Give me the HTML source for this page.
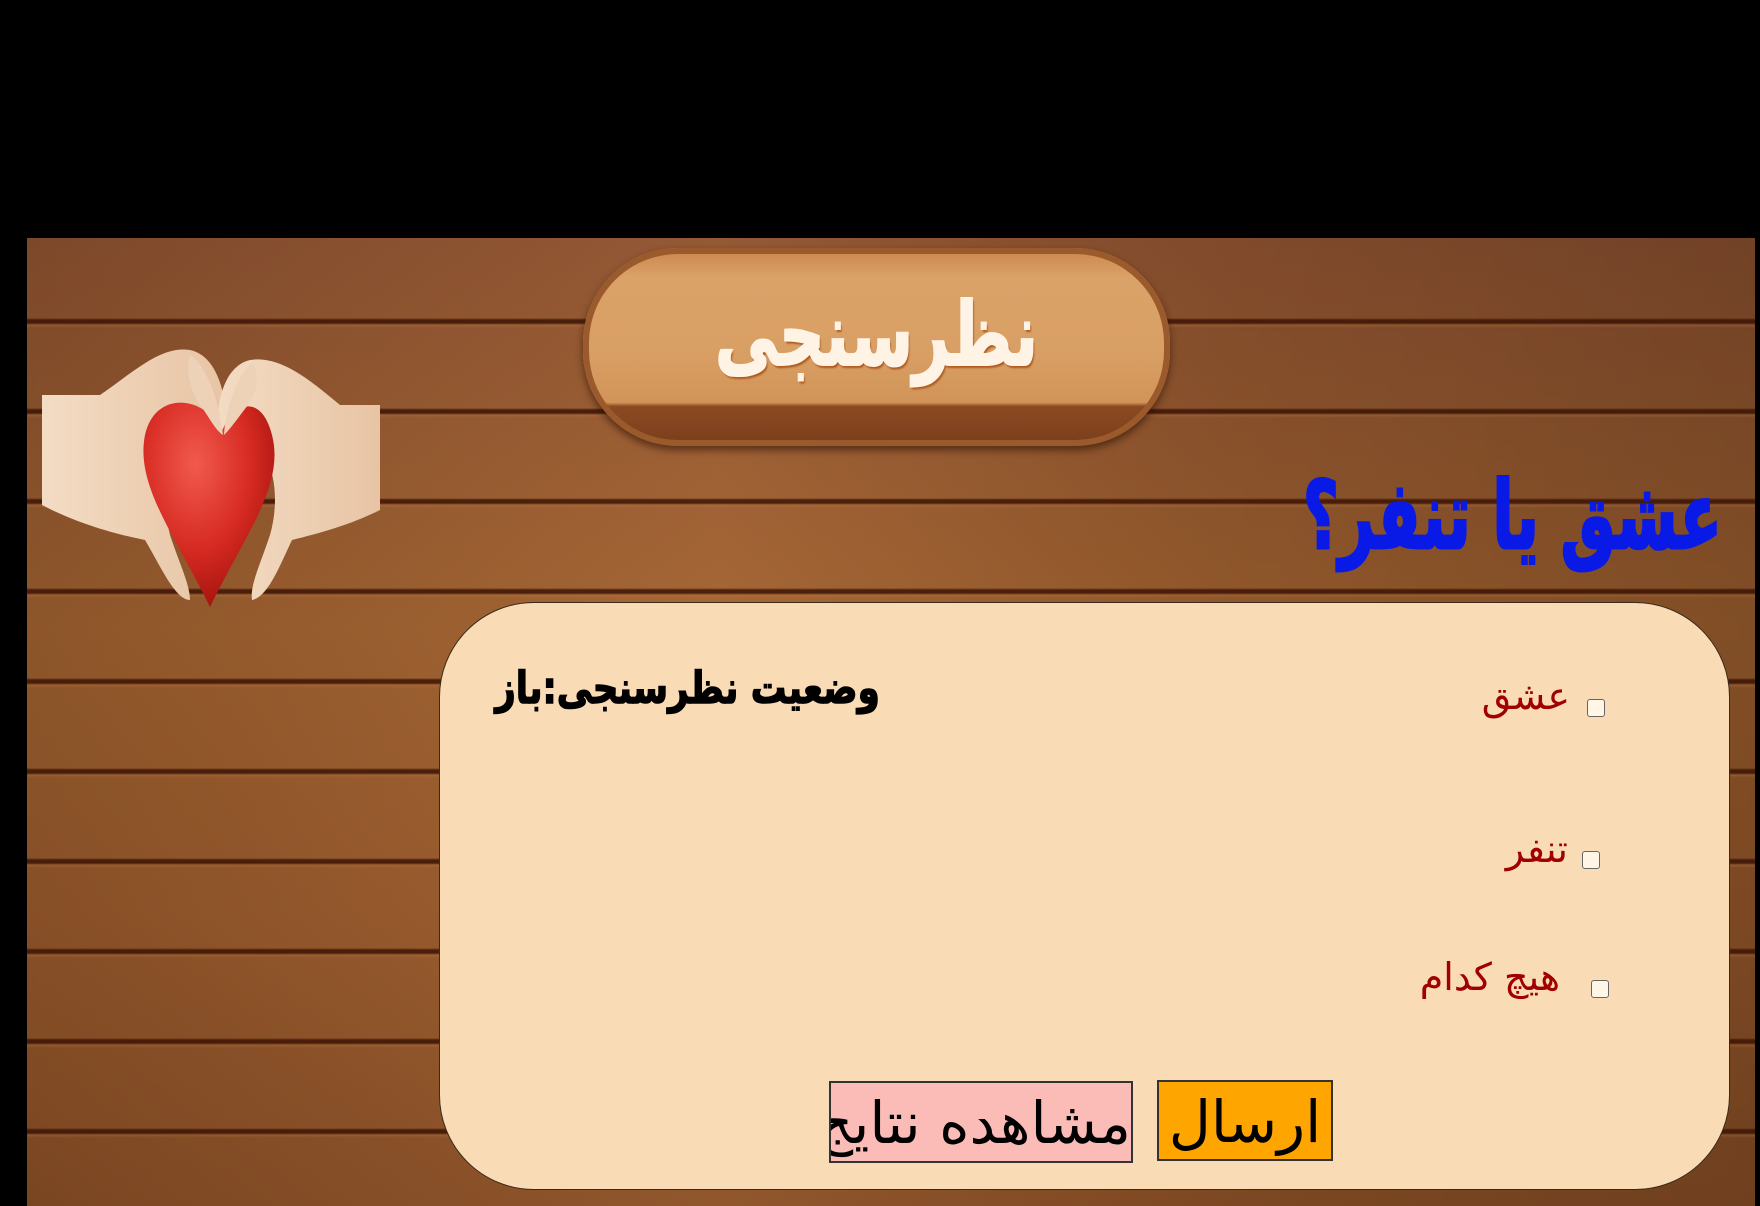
<!DOCTYPE html>
<html><head><meta charset="utf-8">
<style>
html,body{margin:0;padding:0;background:#000;}
body{width:1760px;height:1206px;position:relative;overflow:hidden;font-family:"DejaVu Sans","Liberation Sans","Noto Sans CJK SC",sans-serif;}
.wood{position:absolute;left:27px;top:238px;width:1728px;height:968px;
background:
repeating-linear-gradient(180deg, transparent 0px, transparent 76px, rgba(60,20,5,.85) 78px, rgba(60,20,5,.85) 81px, rgba(200,130,70,.25) 83px, transparent 86px, transparent 90px),
linear-gradient(90deg, rgba(0,0,0,.12), rgba(255,200,140,.06) 40%, rgba(0,0,0,.1) 70%, rgba(0,0,0,.2)),
linear-gradient(180deg,#8e5230,#a0612f 40%,#9a5a2c 70%,#8a4f26);
background-position:0 4px,0 0,0 0;}
.abs{position:absolute;}
.sign{left:583px;top:248px;width:587px;height:198px;border-radius:95px;
background:linear-gradient(180deg,#c9854c 0%,#dba268 15%,#d9a066 50%,#d29458 78%,#8b4a22 80%,#7a3e1b 100%);
box-shadow:0 4px 8px rgba(40,15,5,.6), inset 0 0 0 6px #9a5a2c;}
.signtxt{left:583px;width:587px;top:283px;text-align:center;font-size:88px;font-weight:bold;color:#fff3e6;direction:rtl;
text-shadow:2px 3px 2px #b05a20;transform:scaleX(0.72);-webkit-text-stroke:2px #fff3e6;}
.title{right:38px;top:462px;font-size:94px;font-weight:bold;color:#0a1ae6;direction:rtl;white-space:nowrap;transform:scaleX(0.66);transform-origin:right center;-webkit-text-stroke:3px #0a1ae6;}
.panel{left:439px;top:602px;width:1291px;height:588px;background:#f9dcb5;border:1.5px solid #3a2a1a;border-radius:95px;box-sizing:border-box;}
.status{right:880px;top:663px;text-align:right;font-size:44px;font-weight:bold;color:#000;direction:rtl;white-space:nowrap;transform:scaleX(0.81);transform-origin:right center;-webkit-text-stroke:1.5px #000;}
.lbl{font-size:38px;color:#a00000;direction:rtl;white-space:nowrap;text-align:right;}
.cb{width:18px;height:18px;border:1.5px solid #666;border-radius:3px;background:#fff6e6;box-sizing:border-box;}
.btn{border:2px solid #333;box-sizing:border-box;font-size:58px;color:#000;direction:rtl;white-space:nowrap;overflow:hidden;line-height:80px;text-align:center;}
</style></head><body>
<div class="wood"></div>

<svg class="abs" style="left:40px;top:335px" width="342" height="280" viewBox="0 0 342 280">
  <defs>
    <radialGradient id="hg" cx="40%" cy="30%" r="70%">
      <stop offset="0" stop-color="#f25a4e"/><stop offset="0.6" stop-color="#d62a22"/><stop offset="1" stop-color="#a8150f"/>
    </radialGradient>
    <linearGradient id="sk" x1="0" y1="0" x2="1" y2="0">
      <stop offset="0" stop-color="#f3dcc4"/><stop offset="1" stop-color="#e8c4a4"/>
    </linearGradient>
  </defs>
  <path d="M2 60 L60 60 C90 40 120 10 150 15 C175 20 188 55 186 100 L150 110 C130 120 120 160 130 200 C140 230 150 250 150 265 C135 265 120 230 105 205 C80 200 40 190 2 170 Z" fill="url(#sk)"/>
  <path d="M340 70 L300 70 C270 45 240 20 210 25 C188 30 175 60 178 100 L215 110 C235 125 240 165 230 200 C220 230 210 250 212 265 C228 262 240 230 252 205 C280 198 310 190 340 175 Z" fill="url(#sk)"/>
  <path d="M182 96 C165 60 115 55 105 100 C95 150 135 200 170 272 C205 200 245 150 232 100 C222 60 195 65 182 96 Z" fill="url(#hg)"/>
  <path d="M150 20 C165 30 178 60 183 100 C175 95 168 80 160 70 C150 55 145 35 150 20 Z" fill="#eed2b8"/>
  <path d="M212 28 C198 40 186 70 184 100 C192 92 200 80 208 70 C218 55 220 40 212 28 Z" fill="#eed2b8"/>
</svg>

<div class="abs sign"></div>
<div class="abs signtxt">نظرسنجی</div>

<div class="abs title">عشق یا تنفر؟</div>

<div class="abs panel"></div>
<div class="abs status">وضعیت نظرسنجی:باز</div>

<div class="abs cb" style="left:1587px;top:699px"></div>
<div class="abs lbl" style="right:190px;top:674px">عشق</div>

<div class="abs cb" style="left:1582px;top:851px"></div>
<div class="abs lbl" style="right:192px;top:827px">تنفر</div>

<div class="abs cb" style="left:1591px;top:980px"></div>
<div class="abs lbl" style="right:200px;top:955px">هیچ کدام</div>

<div class="abs btn" style="left:829px;top:1081px;width:304px;height:82px;background:#fbbcb8;">مشاهده نتایج</div>
<div class="abs btn" style="left:1157px;top:1080px;width:176px;height:81px;background:#ffa500;">ارسال</div>
</body></html>
